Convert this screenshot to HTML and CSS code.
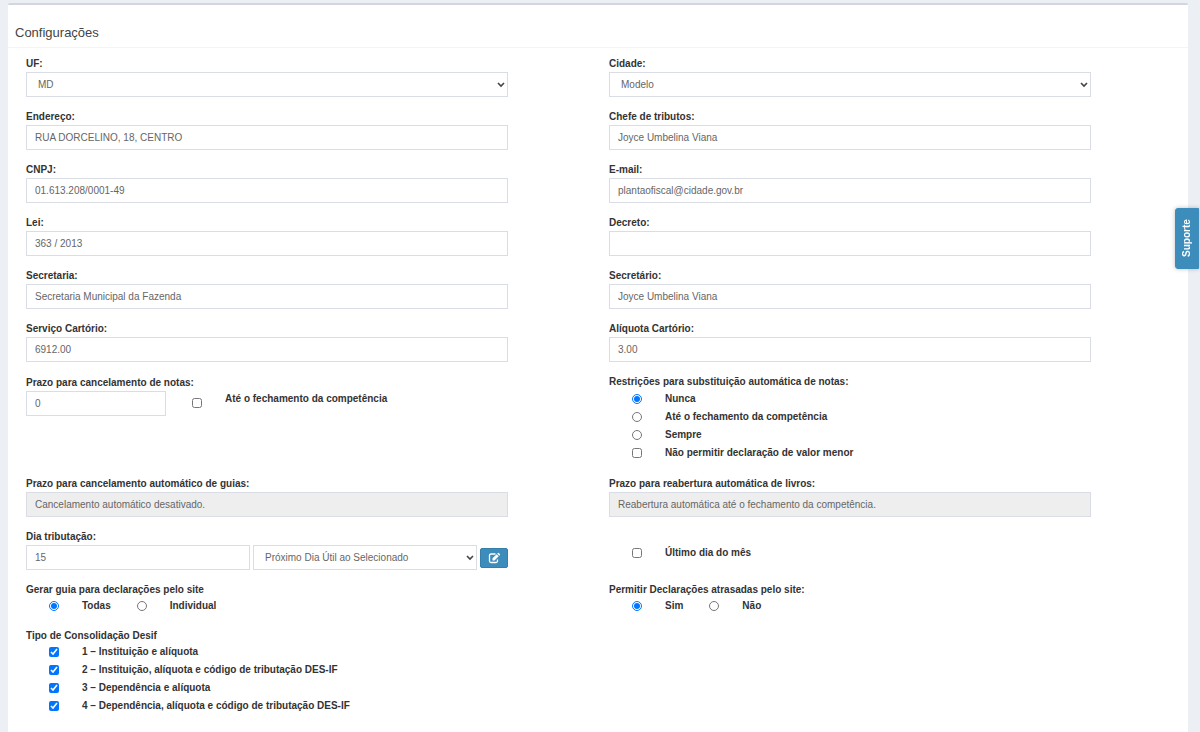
FILE: index.html
```html
<!DOCTYPE html>
<html lang="pt-BR">
<head>
<meta charset="utf-8">
<title>Configurações</title>
<link rel="stylesheet" href="styles.css">
</head>
<body>
<main class="box">
  <header class="box-header"><h1 class="box-title">Configurações</h1></header>
  <form class="form-grid">
    <div class="group"><label class="label" for="uf">UF:</label><select class="control" id="uf"><option>MD</option></select></div>
    <div class="group"><label class="label" for="cidade">Cidade:</label><select class="control" id="cidade"><option>Modelo</option></select></div>

    <div class="group"><label class="label" for="endereco">Endereço:</label><input class="control" id="endereco" type="text" value="RUA DORCELINO, 18, CENTRO"></div>
    <div class="group"><label class="label" for="chefe">Chefe de tributos:</label><input class="control" id="chefe" type="text" value="Joyce Umbelina Viana"></div>

    <div class="group"><label class="label" for="cnpj">CNPJ:</label><input class="control" id="cnpj" type="text" value="01.613.208/0001-49"></div>
    <div class="group"><label class="label" for="email">E-mail:</label><input class="control" id="email" type="text" value="plantaofiscal@cidade.gov.br"></div>

    <div class="group"><label class="label" for="lei">Lei:</label><input class="control" id="lei" type="text" value="363 / 2013"></div>
    <div class="group"><label class="label" for="decreto">Decreto:</label><input class="control" id="decreto" type="text"></div>

    <div class="group"><label class="label" for="secretaria">Secretaria:</label><input class="control" id="secretaria" type="text" value="Secretaria Municipal da Fazenda"></div>
    <div class="group"><label class="label" for="secretario">Secretário:</label><input class="control" id="secretario" type="text" value="Joyce Umbelina Viana"></div>

    <div class="group"><label class="label" for="servico">Serviço Cartório:</label><input class="control" id="servico" type="text" value="6912.00"></div>
    <div class="group"><label class="label" for="aliquota">Alíquota Cartório:</label><input class="control" id="aliquota" type="text" value="3.00"></div>

    <div class="group group-tall">
      <label class="label" for="prazo-notas">Prazo para cancelamento de notas:</label>
      <div class="inline-row">
        <input class="control control-short" id="prazo-notas" type="text" value="0">
        <input class="tick tick-inline" id="ate-fechamento" type="checkbox">
        <label class="inline-label" for="ate-fechamento">Até o fechamento da competência</label>
      </div>
    </div>
    <fieldset class="group group-tall">
      <legend class="label">Restrições para substituição automática de notas:</legend>
      <div class="options">
        <label class="option"><input class="tick" type="radio" name="restricao" checked>Nunca</label>
        <label class="option"><input class="tick" type="radio" name="restricao">Até o fechamento da competência</label>
        <label class="option"><input class="tick" type="radio" name="restricao">Sempre</label>
        <label class="option"><input class="tick" type="checkbox">Não permitir declaração de valor menor</label>
      </div>
    </fieldset>

    <div class="group"><label class="label" for="prazo-guias">Prazo para cancelamento automático de guias:</label><input class="control" id="prazo-guias" type="text" value="Cancelamento automático desativado." readonly></div>
    <div class="group"><label class="label" for="prazo-livros">Prazo para reabertura automática de livros:</label><input class="control" id="prazo-livros" type="text" value="Reabertura automática até o fechamento da competência." readonly></div>

    <div class="group">
      <label class="label" for="dia">Dia tributação:</label>
      <div class="day-row">
        <input class="control" id="dia" type="text" value="15">
        <select class="control" aria-label="Regra do dia"><option>Próximo Dia Útil ao Selecionado</option></select>
        <button class="edit-button" type="button" aria-label="Editar">
          <svg class="edit-icon" viewBox="0 0 12 12" aria-hidden="true"><path d="M7.500 2H3Q1.500 2 1.500 3.500V9Q1.500 10.500 3 10.500H8Q9.500 10.500 9.500 9V7.500" fill="none" stroke="currentColor" stroke-width="1.300"/><path d="M4.500 8.500V6.300L8.600 2.200 10.700 4.300 6.500 8.500ZM9.200 1.600L9.900.9Q10.300.5 10.700.9L11.900 2.100Q12.200 2.500 11.900 2.900L11.200 3.700Z" fill="currentColor"/></svg>
        </button>
      </div>
    </div>
    <div class="group group-unlabeled">
      <div class="options"><label class="option"><input class="tick" type="checkbox">Último dia do mês</label></div>
    </div>

    <fieldset class="group">
      <legend class="label">Gerar guia para declarações pelo site</legend>
      <div class="options options-inline">
        <label class="option"><input class="tick" type="radio" name="guia" checked>Todas</label>
        <label class="option"><input class="tick" type="radio" name="guia">Individual</label>
      </div>
    </fieldset>
    <fieldset class="group">
      <legend class="label">Permitir Declarações atrasadas pelo site:</legend>
      <div class="options options-inline">
        <label class="option"><input class="tick" type="radio" name="atrasadas" checked>Sim</label>
        <label class="option"><input class="tick" type="radio" name="atrasadas">Não</label>
      </div>
    </fieldset>

    <fieldset class="group">
      <legend class="label">Tipo de Consolidação Desif</legend>
      <div class="options">
        <label class="option"><input class="tick" type="checkbox" checked>1 – Instituição e alíquota</label>
        <label class="option"><input class="tick" type="checkbox" checked>2 – Instituição, alíquota e código de tributação DES-IF</label>
        <label class="option"><input class="tick" type="checkbox" checked>3 – Dependência e alíquota</label>
        <label class="option"><input class="tick" type="checkbox" checked>4 – Dependência, alíquota e código de tributação DES-IF</label>
      </div>
    </fieldset>
  </form>
</main>
<button class="support" type="button">Suporte</button>
</body>
</html>
```
FILE: styles.css
```css
* { box-sizing: border-box; }

body {
  margin: 0;
  padding: 3px 12px 0 8px;
  background: #ecf0f5;
  color: #333;
  font: 10px/14px "Liberation Sans", Arial, sans-serif;
}

.box {
  min-height: calc(100vh - 3px);
  background: #fff;
  border-top: 2px solid #d2d6de;
  border-radius: 2px 2px 0 0;
}

.box-header {
  padding: 19px 7px 6px;
  border-bottom: 1px solid #f4f4f4;
}

.box-title {
  margin: 0;
  color: #444;
  font-size: 13px;
  font-weight: 400;
  line-height: 17px;
}

.form-grid {
  display: grid;
  grid-template-columns: 1fr 1fr;
  column-gap: 101px;
  row-gap: 13px;
  padding: 9px 97px 16px 18px;
}

.group {
  min-width: 0;
  margin: 0;
  padding: 0;
  border: 0;
}

.group-tall {
  min-height: 89px;
  padding-top: 1px;
}

.group-unlabeled { padding-top: 14px; }

.label {
  display: block;
  padding: 0;
  font-weight: 700;
}

.control {
  display: block;
  width: 100%;
  height: 25px;
  margin: 1px 0 0;
  padding: 0 8px;
  border: 1px solid #dadde4;
  border-radius: 0;
  background: #fff;
  color: #666;
  font: inherit;
}

select.control {
  appearance: none;
  padding: 0 20px 0 11px;
  background: #fff url("data:image/svg+xml,%3Csvg xmlns='http://www.w3.org/2000/svg' width='8' height='6'%3E%3Cpath d='M1 1l3 3 3-3' fill='none' stroke='%23444' stroke-width='1.6'/%3E%3C/svg%3E") no-repeat right 2px center;
}

.control:read-only:not(select) {
  background: #eee;
}

.inline-row {
  display: flex;
  align-items: center;
}

.control-short { width: 140px; }

.tick {
  flex: none;
  width: 10px;
  height: 10px;
  margin: 0;
}

.tick-inline { margin: 0 23px 0 26px; }

.inline-label {
  align-self: flex-start;
  padding-top: 2px;
  font-weight: 700;
}

.options-inline {
  display: flex;
  gap: 3px;
  padding-bottom: 1px;
}

.option {
  display: flex;
  align-items: center;
  gap: 23px;
  padding-left: 23px;
  font-weight: 700;
  line-height: 18px;
}

.day-row {
  display: grid;
  grid-template-columns: 1fr 1fr 28px;
  gap: 3px;
  align-items: center;
}

.edit-button {
  display: flex;
  align-items: center;
  justify-content: center;
  height: 20px;
  margin: 1px 0 0;
  padding: 0;
  border: 1px solid #367fa9;
  border-radius: 2px;
  background: #3c8dbc;
  color: #fff;
}

.edit-icon {
  width: 12px;
  height: 12px;
}

.support {
  position: fixed;
  top: 208px;
  right: 1px;
  height: 61px;
  width: 24px;
  padding: 0;
  border: 1px solid #3c8dbc;
  border-radius: 0 3px 3px 0;
  background: #3c8dbc;
  box-shadow: 0 0 4px rgba(0, 0, 0, 0.25);
  color: #fff;
  font: 700 10px/22px "Liberation Sans", Arial, sans-serif;
  writing-mode: vertical-rl;
  transform: rotate(180deg);
}
```
